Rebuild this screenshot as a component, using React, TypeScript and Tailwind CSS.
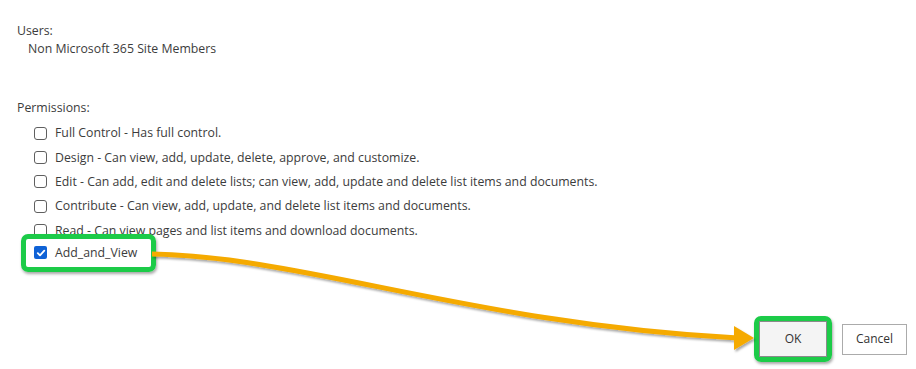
import React from 'react';

const permissions = [
  'Full Control - Has full control.',
  'Design - Can view, add, update, delete, approve, and customize.',
  'Edit - Can add, edit and delete lists; can view, add, update and delete list items and documents.',
  'Contribute - Can view, add, update, and delete list items and documents.',
  'Read - Can view pages and list items and download documents.',
];

const Box: React.FC<{ checked?: boolean }> = ({ checked }) =>
  checked ? (
    <span className="flex h-[13px] w-[13px] shrink-0 items-center justify-center rounded-[2px] bg-[#0f62d6]">
      <svg width="10" height="10" viewBox="0 0 10 10">
        <path d="M1.8 5.2 L4 7.4 L8.3 2.6" fill="none" stroke="#fff" strokeWidth="1.8" strokeLinecap="round" strokeLinejoin="round" />
      </svg>
    </span>
  ) : (
    <span className="h-[13px] w-[13px] shrink-0 rounded-[3px] border border-[#5f5f5f] bg-white" />
  );

export default function App() {
  return (
    <div
      className="relative h-[369px] w-[916px] overflow-hidden bg-white text-[12.3px] leading-[18px] text-[#3c3c3c]"
      style={{ fontFamily: '"Open Sans", "Noto Sans", sans-serif' }}
    >
      <div className="flex h-full flex-col pl-[17px] pt-[22px]">
        {/* Users */}
        <div>Users:</div>
        <div className="pl-[11px]">Non Microsoft 365 Site Members</div>

        {/* Permissions */}
        <div className="mt-[41px]">Permissions:</div>
        <div className="mt-[4px] flex flex-col pl-[17px]">
          {permissions.map((p) => (
            <label key={p} className="flex h-[24.4px] items-center gap-[8px]">
              <Box />
              <span>{p}</span>
            </label>
          ))}
          <div className="-ml-[13px] -mt-[9px] self-start rounded-[7px] border-[5px] border-[#1ccb48] px-[8px] py-[2px] shadow-[1px_2px_3px_rgba(0,0,0,0.35)]">
            <label className="flex h-[24px] items-center gap-[8px] pr-[6px]">
              <Box checked />
              <span>Add_and_View</span>
            </label>
          </div>
        </div>

        {/* Buttons */}
        <div className="mt-auto mb-[7px] flex items-center justify-end gap-[10px] pr-[9px]">
          <div className="rounded-[7px] border-[5px] border-[#1ccb48] shadow-[1px_2px_3px_rgba(0,0,0,0.35)]">
            <button className="h-[36px] w-[68px] border border-[#8a8a8a] bg-[#f4f4f4] text-[12px] text-[#333]">
              OK
            </button>
          </div>
          <button className="h-[31px] w-[65px] border border-[#ababab] bg-white text-[12px] text-[#333]">
            Cancel
          </button>
        </div>
      </div>

      {/* Callout arrow */}
      <svg className="pointer-events-none absolute left-0 top-0" width="916" height="369">
        <defs>
          <filter id="sh" x="-5%" y="-20%" width="110%" height="140%">
            <feDropShadow dx="1.5" dy="2" stdDeviation="1.2" floodColor="#000" floodOpacity="0.35" />
          </filter>
        </defs>
        <g filter="url(#sh)">
          <path d="M152 254 C 300 256, 480 325, 738 338" fill="none" stroke="#f5aa06" strokeWidth="5" />
          <polygon points="734,326 754,338 734,350" fill="#f5aa06" />
        </g>
      </svg>
    </div>
  );
}
